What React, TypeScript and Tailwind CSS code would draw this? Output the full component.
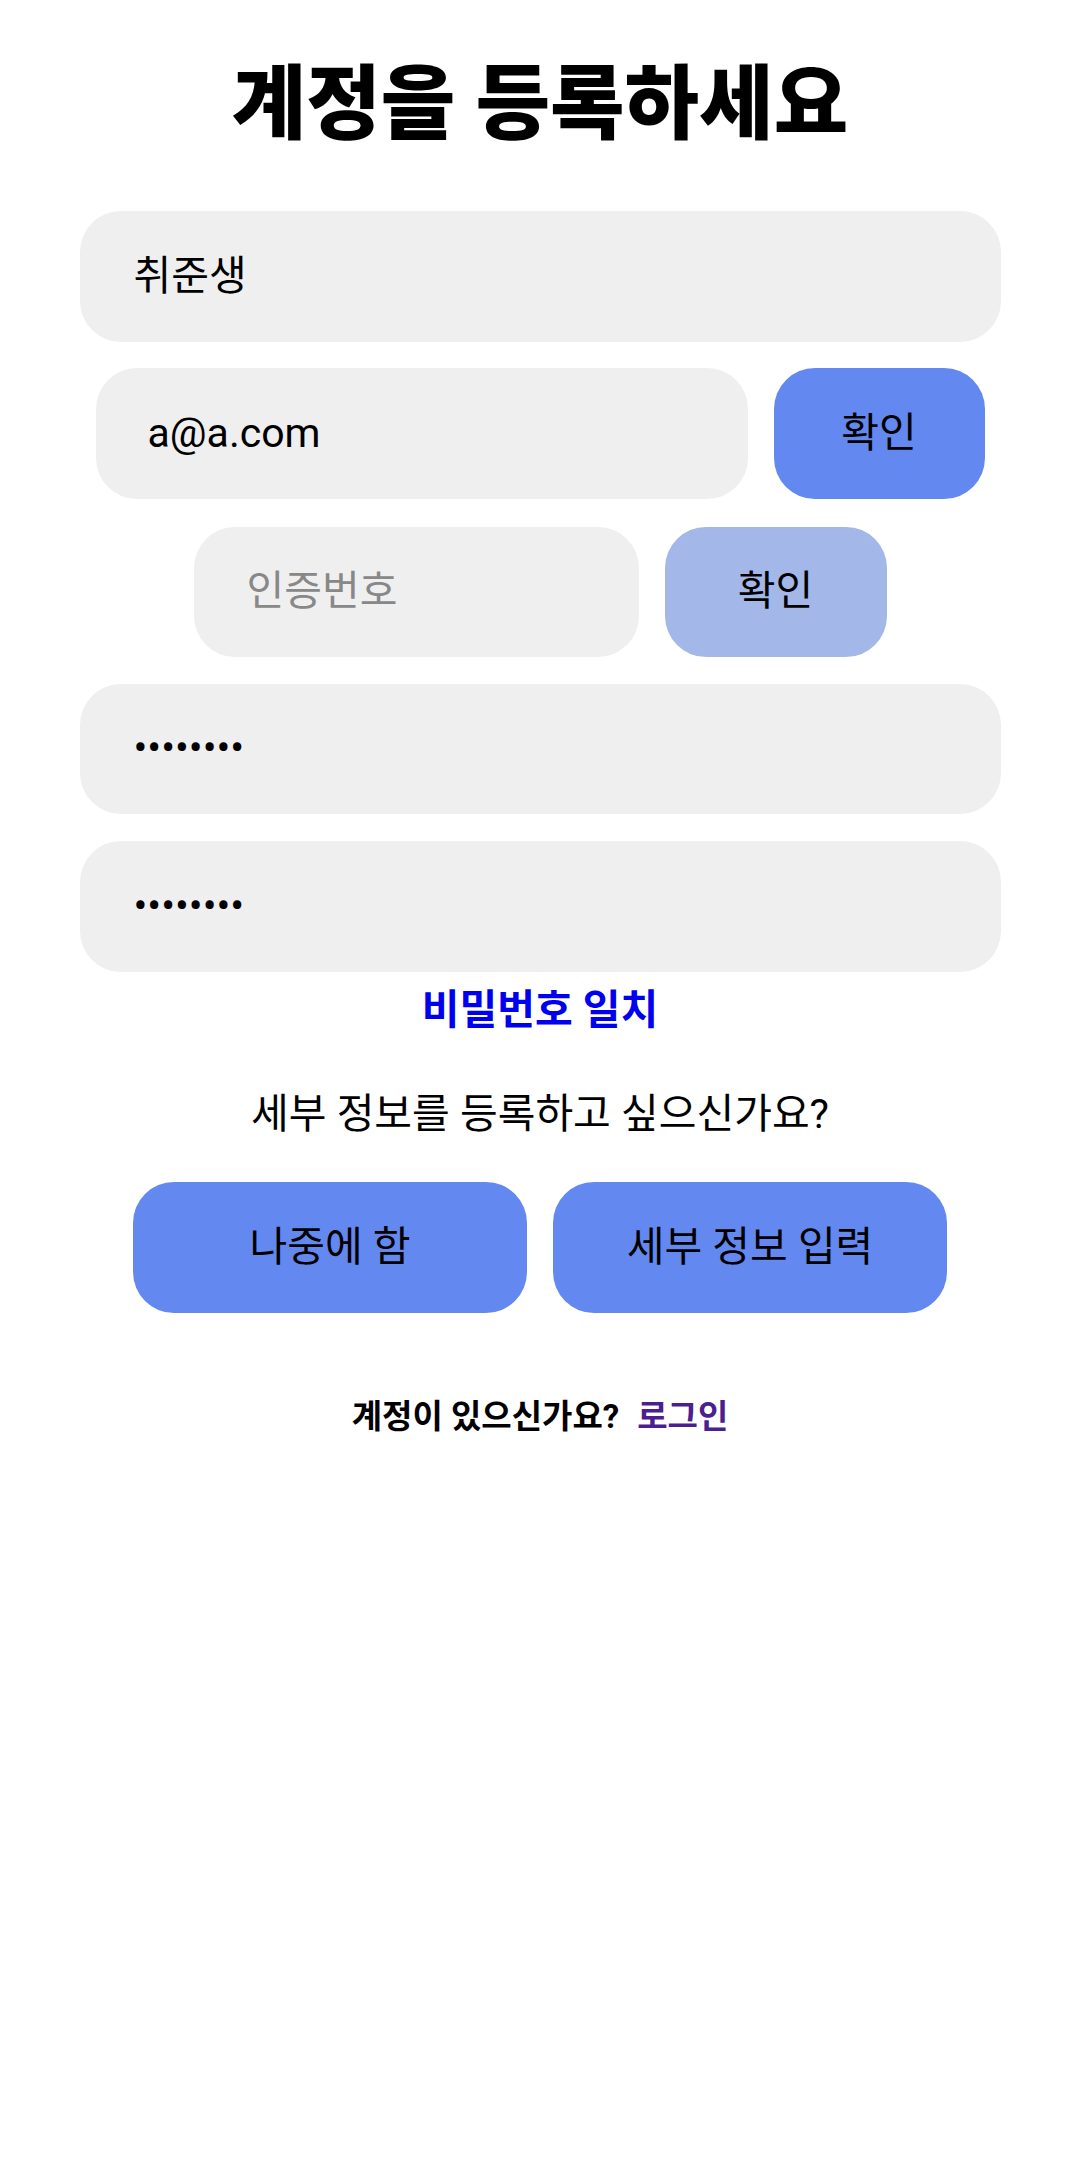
export default function App() {
  return (
    <div className="min-h-[2163px] bg-white flex flex-col items-center pt-[60px] font-['Roboto','Noto_Sans_CJK_KR',sans-serif] text-black">
      {/* Title */}
      <h1 className="text-[81px] leading-[90px] font-extrabold">계정을 등록하세요</h1>

      {/* Name */}
      <div className="mt-[61px] w-[921px] h-[131px] rounded-[41px] bg-[#efefef] flex items-center pl-[54px] text-[41px]">
        취준생
      </div>

      {/* Email + confirm */}
      <div className="mt-[26px] flex gap-[26px]">
        <div className="w-[652px] h-[131px] rounded-[41px] bg-[#efefef] flex items-center pl-[52px] text-[41px]">
          a@a.com
        </div>
        <button className="w-[211px] h-[131px] rounded-[41px] bg-[#6389f0] text-[41px] flex items-center justify-center">
          확인
        </button>
      </div>

      {/* Verification code */}
      <div className="mt-[28px] flex gap-[26px]">
        <div className="w-[445px] h-[130px] rounded-[41px] bg-[#efefef] flex items-center pl-[53px] text-[41px] text-[#888888]">
          인증번호
        </div>
        <button className="w-[222px] h-[130px] rounded-[41px] bg-[#a3b8e9] text-[41px] flex items-center justify-center">
          확인
        </button>
      </div>

      {/* Passwords */}
      <div className="mt-[27px] w-[921px] h-[130px] rounded-[41px] bg-[#efefef] flex items-center pl-[54px] text-[41px]">
        ••••••••
      </div>
      <div className="mt-[27px] w-[921px] h-[131px] rounded-[41px] bg-[#efefef] flex items-center pl-[54px] text-[41px]">
        ••••••••
      </div>

      <p className="mt-[13px] text-[41px] leading-[50px] font-bold text-[#0000f0]">비밀번호 일치</p>

      <p className="mt-[56px] text-[41px] leading-[46px]">세부 정보를 등록하고 싶으신가요?</p>

      <div className="mt-[45px] flex gap-[26px]">
        <button className="w-[394px] h-[131px] rounded-[41px] bg-[#6389f0] text-[41px] flex items-center justify-center">
          나중에 함
        </button>
        <button className="w-[394px] h-[131px] rounded-[41px] bg-[#6389f0] text-[41px] flex items-center justify-center">
          세부 정보 입력
        </button>
      </div>

      <div className="mt-[85px] flex items-center gap-[18px] text-[33px] leading-[38px] font-bold">
        <span>계정이 있으신가요?</span>
        <span className="text-[#4b1f8f]">로그인</span>
      </div>
    </div>
  );
}
